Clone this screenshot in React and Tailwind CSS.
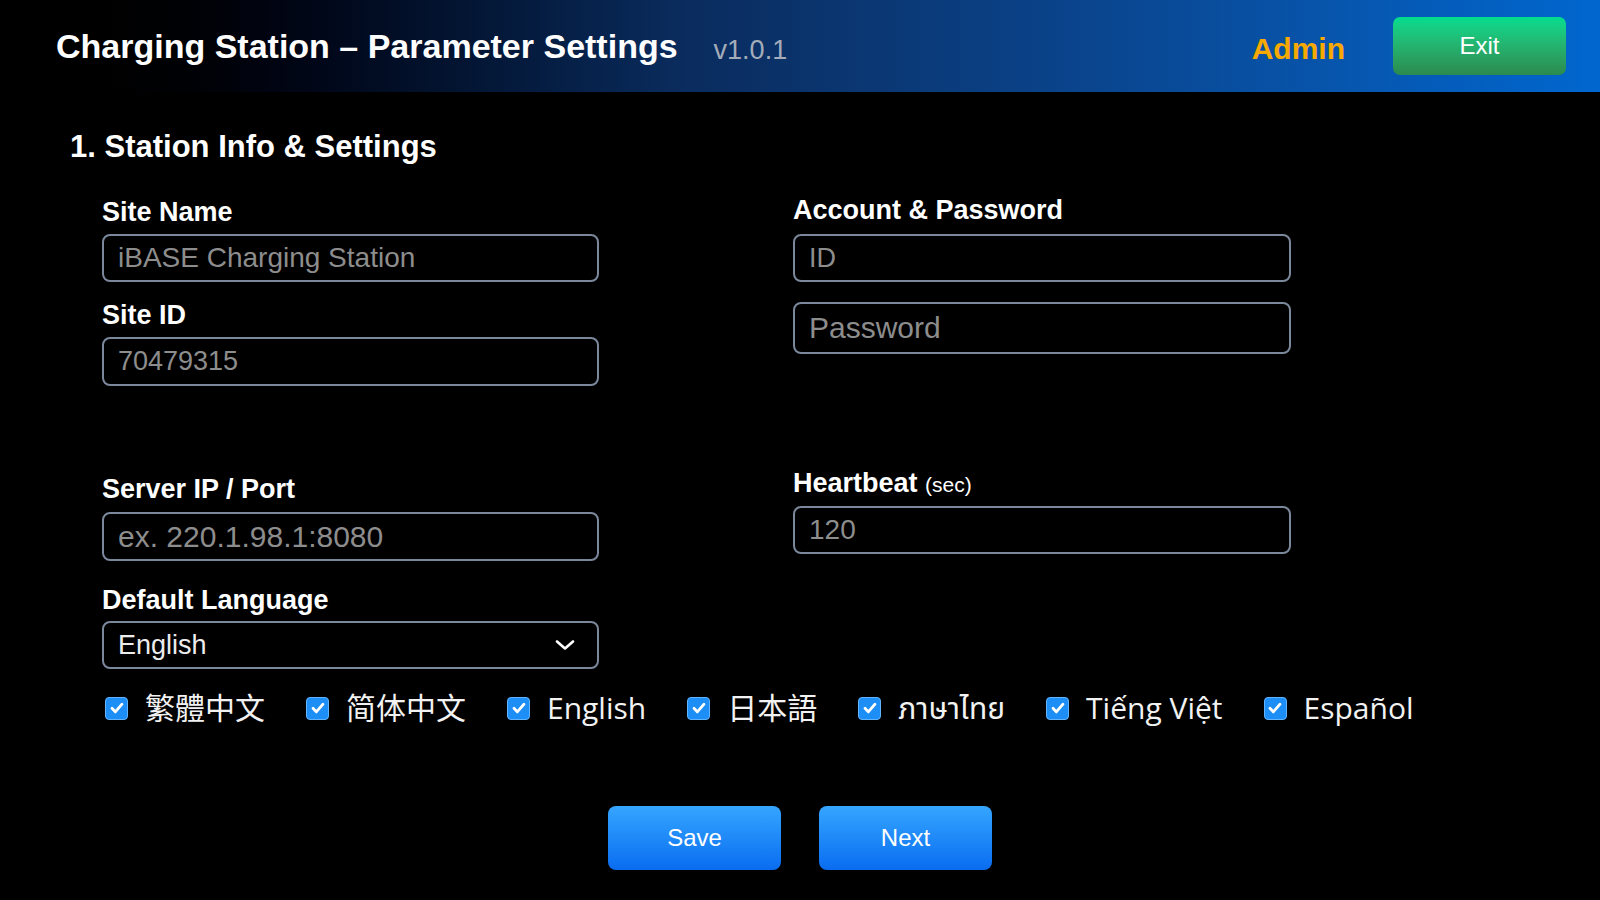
import React from 'react';

const labelCls = "block text-[27px] font-bold leading-[32px] text-white";
const inputCls = "w-full rounded-[8px] border-2 border-[#7b889c] bg-black px-[14px] text-[#d8d8d8] outline-none placeholder:text-[#8d8d8d] font-['Liberation_Sans',Arial,sans-serif]";

const languages = ['繁體中文', '简体中文', 'English', '日本語', 'ภาษาไทย', 'Tiếng Việt', 'Español'];

function CheckBox() {
  return (
    <span className="flex h-[23px] w-[23px] items-center justify-center rounded-[4px] border border-[#63b4ff] bg-[#1c8ef5]">
      <svg width="16" height="16" viewBox="0 0 16 16" fill="none">
        <path d="M3 8.3l3.3 3.6L13 4.2" stroke="white" strokeWidth="2.8" strokeLinecap="round" strokeLinejoin="round" />
      </svg>
    </span>
  );
}

export default function App() {
  return (
    <div className="min-h-screen w-full bg-black text-white font-['Liberation_Sans',Arial,sans-serif]">
      {/* top bar */}
      <header className="flex h-[92px] items-center bg-linear-to-r from-black from-[2%] via-[#0a2b5c] via-[42%] to-[#0067cf] pl-[56px] pr-[34px]">
        <h1 className="text-[34px] font-bold leading-none">Charging Station – Parameter Settings</h1>
        <span className="ml-[36px] mt-[8px] text-[27px] leading-none text-[#a4acb9]">v1.0.1</span>
        <span className="ml-auto mt-[6px] text-[30px] font-bold leading-none text-[#f7a900]">Admin</span>
        <button className="ml-[48px] h-[58px] w-[173px] rounded-[7px] bg-linear-to-b from-[#00dd8f] to-[#2b8a4f] text-[24px] text-white">
          Exit
        </button>
      </header>

      <main className="pl-[70px] pt-[37px]">
        <h2 className="text-[31px] font-bold leading-[36px]">1. Station Info &amp; Settings</h2>

        <div className="mt-[29px] flex gap-[194px] pl-[32px]">
          {/* left column */}
          <div className="flex w-[497px] flex-col pt-[2px]">
            <label className={labelCls}>Site Name</label>
            <input className={`${inputCls} mt-[6px] h-[48px] text-[28px]`} placeholder="iBASE Charging Station" />
            <label className={`${labelCls} mt-[17px]`}>Site ID</label>
            <input className={`${inputCls} mt-[6px] h-[49px] text-[27px]`} placeholder="70479315" />
            <label className={`${labelCls} mt-[87px]`}>Server IP / Port</label>
            <input className={`${inputCls} mt-[7px] h-[49px] text-[30px]`} placeholder="ex. 220.1.98.1:8080" />
            <label className={`${labelCls} mt-[23px]`}>Default Language</label>
            <div className="mt-[5px] flex h-[48px] items-center justify-between rounded-[8px] border-2 border-[#7b889c] pl-[14px] pr-[22px]">
              <span className="text-[27px] text-[#ececec]">English</span>
              <svg width="20" height="10" viewBox="0 0 20 10" fill="none">
                <path d="M2 1.5l8 7 8-7" stroke="white" strokeWidth="2.6" strokeLinecap="round" strokeLinejoin="round" />
              </svg>
            </div>
          </div>

          {/* right column */}
          <div className="flex w-[498px] flex-col">
            <label className={`${labelCls} text-[27.5px]`}>Account &amp; Password</label>
            <input className={`${inputCls} mt-[8px] h-[48px] text-[27px]`} placeholder="ID" />
            <input className={`${inputCls} mt-[20px] h-[52px] text-[30px]`} placeholder="Password" type="password" />
            <label className={`${labelCls} mt-[113px]`}>
              Heartbeat <span className="text-[21px] font-normal">(sec)</span>
            </label>
            <input className={`${inputCls} mt-[5px] h-[48px] text-[28px]`} placeholder="120" />
          </div>
        </div>

        <div className="mt-[19px] flex h-[40px] items-center gap-[41px] pl-[35px] font-['Open_Sans','Noto_Sans','Noto_Sans_Thai','Noto_Sans_CJK_TC',sans-serif] text-[30px] text-[#f2f2f2]">
          {languages.map((lang) => (
            <div key={lang} className="flex items-center gap-[17px]">
              <CheckBox />
              <span className="leading-none">{lang}</span>
            </div>
          ))}
        </div>
      </main>

      <div className="mt-[78px] flex justify-center gap-[38px]">
        <button className="h-[64px] w-[173px] rounded-[8px] bg-linear-to-b from-[#35a5ff] to-[#0a6cf0] text-[24px] text-white">Save</button>
        <button className="h-[64px] w-[173px] rounded-[8px] bg-linear-to-b from-[#35a5ff] to-[#0a6cf0] text-[24px] text-white">Next</button>
      </div>
    </div>
  );
}
